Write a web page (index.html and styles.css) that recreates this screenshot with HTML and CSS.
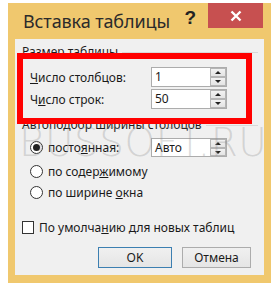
FILE: index.html
```html
<!DOCTYPE html>
<html lang="ru">
<head>
<meta charset="utf-8">
<link rel="stylesheet" href="styles.css">
</head>
<body>
<div class="window">
  <div class="titlebar">
    <span class="title">Вставка таблицы</span>
    <span class="help">?</span>
    <div class="close"><svg width="12" height="12" viewBox="0 0 12 12"><path d="M1.5 1.5 L10.5 10.5 M10.5 1.5 L1.5 10.5" stroke="#fff" stroke-width="2.4"/></svg></div>
  </div>
  <div class="panel">
    <div class="sep sep1"><span>Размер таблицы</span><i></i></div>
    <div class="row row1">
      <span class="lbl"><u>Ч</u>исло столбцов:</span>
      <div class="spin"><span class="val">1</span><div class="arrows"><b class="up"></b><b class="down"></b></div></div>
    </div>
    <div class="row row2">
      <span class="lbl">Ч<u>и</u>сло строк:</span>
      <div class="spin"><span class="val">50</span><div class="arrows"><b class="up"></b><b class="down"></b></div></div>
    </div>
    <div class="sep sep2"><span>Автоподбор ширины столбцов</span><i></i></div>
    <div class="opt opt1">
      <span class="radio on"></span><span class="olbl">посто<u>я</u>нная:</span>
      <div class="spin auto"><span class="val">Авто</span><div class="arrows"><b class="up"></b><b class="down"></b></div></div>
    </div>
    <div class="opt opt2"><span class="radio"></span><span class="olbl">по содер<u>ж</u>имому</span></div>
    <div class="opt opt3"><span class="radio"></span><span class="olbl">по ширине <u>о</u>кна</span></div>
    <div class="chk"><span class="box"></span><span>По умолча<u>н</u>ию для новых таблиц</span></div>
    <div class="buttons">
      <div class="btn ok">OK</div>
      <div class="btn cancel">Отмена</div>
    </div>
    <div class="mark">BUSSOFT.RU</div>
    <div class="redbox"></div>
  </div>
</div>
</body>
</html>
```
FILE: styles.css
```css
* { box-sizing: border-box; }
html, body { margin: 0; padding: 0; }
body {
  width: 278px;
  height: 288px;
  background: #ffffff;
  font-family: "Noto Sans", "Open Sans", sans-serif;
  font-size: 12px;
  color: #1a1a1a;
  overflow: hidden;
}
.window {
  margin: 3px 0 0 8px;
  width: 263px;
  height: 280px;
  background: #f0c86e;
  padding: 0 7px 8px 7px;
}
.titlebar {
  height: 36px;
  display: flex;
  align-items: flex-start;
}
.title {
  font-size: 18px;
  line-height: 36px;
  color: #2b2b2b;
  flex: 1;
  padding-left: 8px;
  letter-spacing: -0.1px;
}
.help {
  font-size: 19px;
  font-weight: bold;
  line-height: 30px;
  color: #222;
  margin-right: 12px;
  font-family: "Liberation Sans", sans-serif;
}
.close {
  width: 55px;
  height: 25px;
  background: #c75050;
  display: flex;
  align-items: center;
  justify-content: center;
  margin-right: 1px;
}
.panel {
  position: relative;
  background: #f0f0f0;
  height: 236px;
  padding: 5px 6px 0 7px;
}
.sep {
  display: flex;
  align-items: center;
  height: 16px;
  line-height: 16px;
}
.sep span { padding-right: 4px; color: #1e1e1e; }
.sep i { flex: 1; border-top: 1px solid #d8d8d8; }
.row {
  display: flex;
  align-items: center;
  height: 20px;
  padding-left: 8px;
}
.row1 { margin-top: 7px; }
.row2 { margin-top: 2px; }
.lbl { width: 121px; }
.spin {
  width: 76px;
  height: 20px;
  border: 1px solid #acacac;
  background: #fff;
  display: flex;
  align-items: stretch;
}
.val { flex: 1; padding-left: 3px; line-height: 18px; }
.arrows {
  width: 16px;
  display: flex;
  flex-direction: column;
}
.arrows b {
  flex: 1;
  border: 1px solid #b5b5b5;
  background: linear-gradient(#f2f2f2, #e4e4e4);
  position: relative;
}
.arrows b::after {
  content: "";
  position: absolute;
  left: 4px;
  top: 2px;
  border-left: 3px solid transparent;
  border-right: 3px solid transparent;
}
.arrows .up::after { border-bottom: 3px solid #222; }
.arrows .down::after { border-top: 3px solid #222; }
.sep2 { margin-top: 8px; }
.opt {
  display: flex;
  align-items: center;
  height: 21px;
  padding-left: 8px;
}
.opt1 { margin-top: 4px; }
.opt2 { margin-top: 3px; }
.radio {
  width: 13px;
  height: 13px;
  border-radius: 50%;
  border: 1px solid #333;
  background: #fff;
  display: flex;
  align-items: center;
  justify-content: center;
}
.radio.on::after {
  content: "";
  width: 7px;
  height: 7px;
  border-radius: 50%;
  background: #222;
}
.olbl { margin-left: 5px; }
.opt1 .olbl { width: 103px; }
.spin.auto { height: 19px; }
.chk {
  display: flex;
  align-items: center;
  height: 20px;
  margin-top: 14px;
}
.box {
  width: 12px;
  height: 13px;
  border: 1px solid #333;
  background: #fff;
  margin-right: 5px;
}
.buttons {
  display: flex;
  justify-content: flex-end;
  gap: 10px;
  margin-top: 10px;
  padding-right: 7px;
}
.btn {
  height: 21px;
  border: 1px solid #acacac;
  background: linear-gradient(#f0f0f0, #e5e5e5);
  text-align: center;
  line-height: 19px;
}
.ok { width: 74px; border-color: #3c7fb1; }
.cancel { width: 69px; }
.mark {
  position: absolute;
  left: 4px;
  top: 81px;
  width: 240px;
  text-align: center;
  font-family: "DejaVu Sans", sans-serif;
  font-weight: 200;
  font-size: 39px;
  color: rgba(140, 140, 140, 0.3);
  letter-spacing: 0.5px;
  white-space: nowrap;
  pointer-events: none;
}
.redbox {
  position: absolute;
  left: 2px;
  top: 14px;
  width: 235px;
  height: 71px;
  border: 6px solid #ff0000;
}
```
